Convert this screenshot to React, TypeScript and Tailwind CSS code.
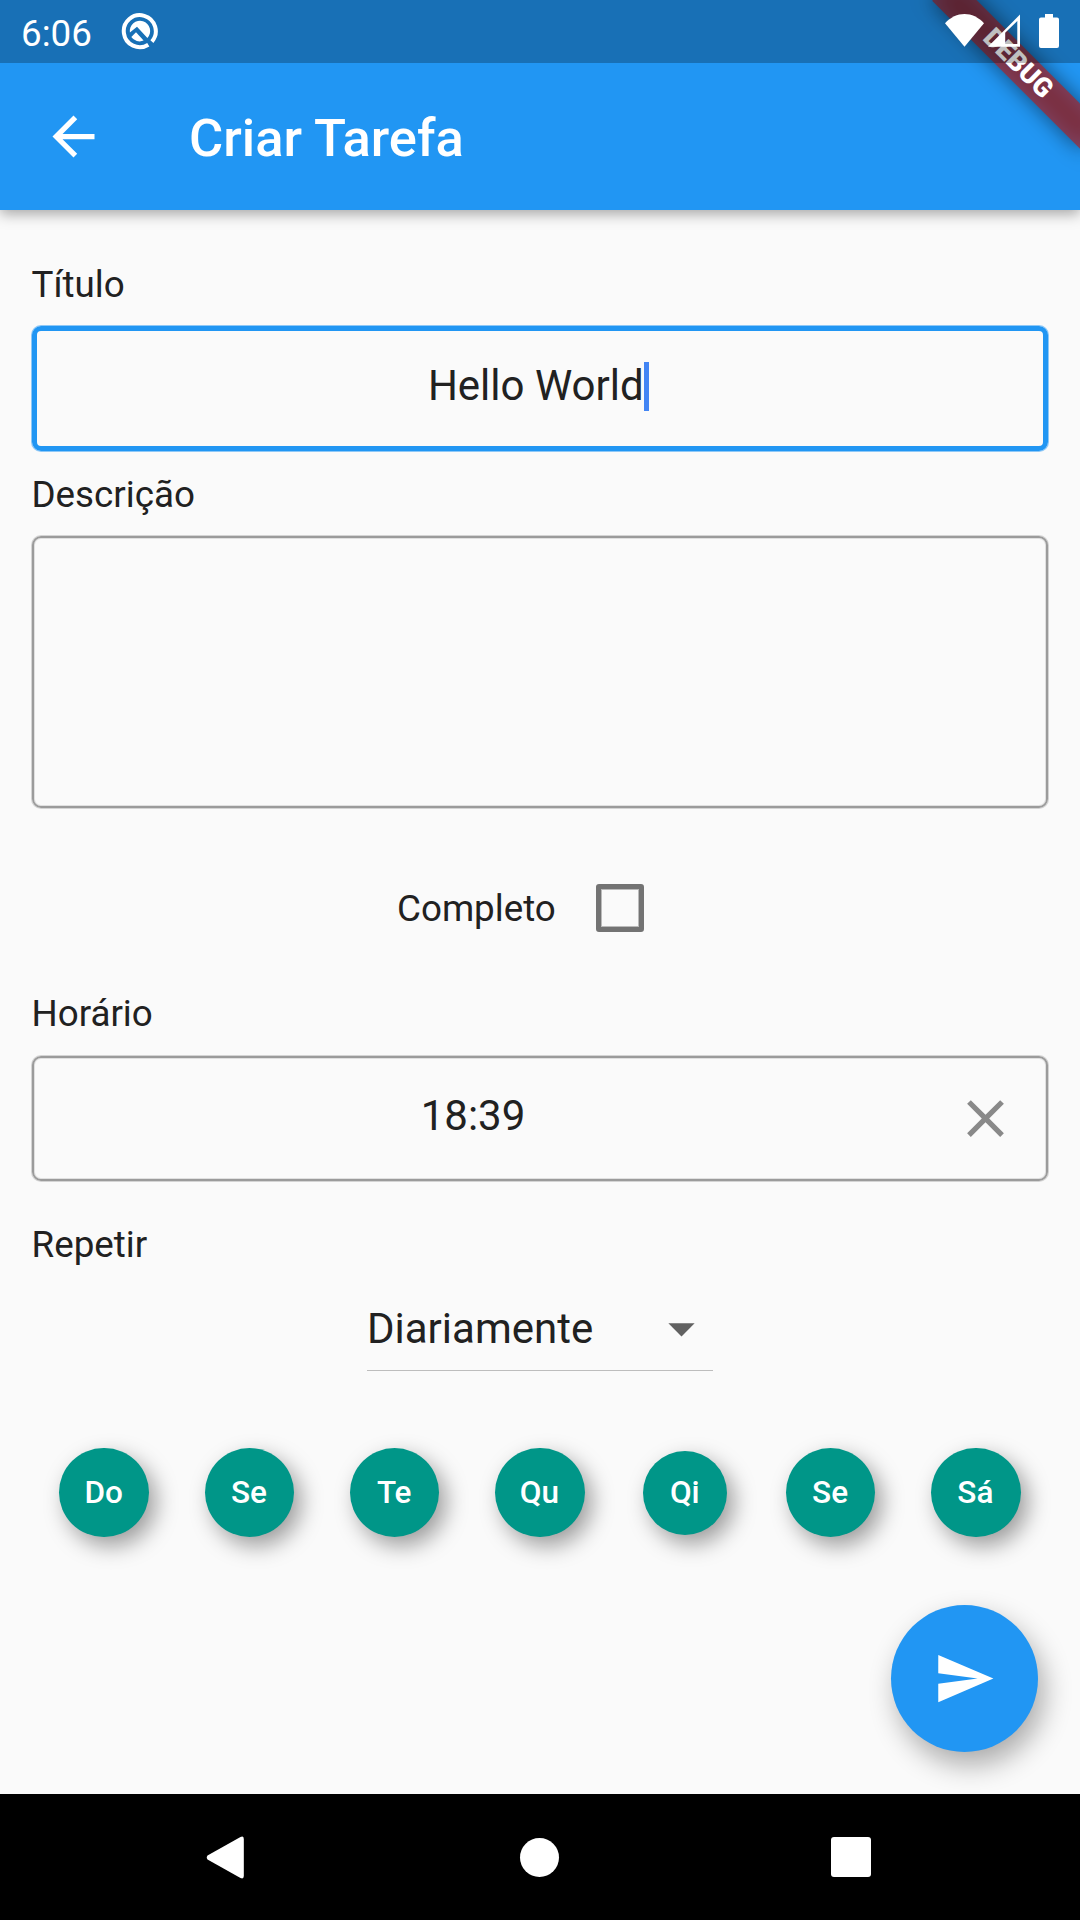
import type { ReactNode } from "react";
import { MdArrowBack, MdArrowDropDown, MdClose, MdSend } from "react-icons/md";

const days = [
  { label: "Do", size: "w-[89.5px] h-[89.5px]" },
  { label: "Se", size: "w-[89.5px] h-[89.5px]" },
  { label: "Te", size: "w-[89.5px] h-[89.5px]" },
  { label: "Qu", size: "w-[89.5px] h-[89.5px]" },
  { label: "Qi", size: "w-[84px] h-[84px]" },
  { label: "Se", size: "w-[89.5px] h-[89.5px]" },
  { label: "Sá", size: "w-[89.5px] h-[89.5px]" },
];

function Label({ children, className = "" }: { children: ReactNode; className?: string }) {
  return <div className={`-ml-[0.5px] text-[36.75px] leading-[43px] ${className}`}>{children}</div>;
}

function StatusBar() {
  return (
    <div className="flex h-[63px] items-start bg-black/25 px-[21px] text-white">
      <span className="mt-[12px] w-[100px] text-[36.75px] leading-[43px]">6:06</span>
      <svg className="mt-[13px] h-[37px] w-[38px]" viewBox="0 0 38 37" fill="none">
        <path d="M27.3 31.7A16 16 0 1 1 30.9 28.6" stroke="#fff" strokeWidth="4" />
        <path d="M8.9 19.6A10.2 10.2 0 1 1 26.4 25L16 13.7Z" fill="#fff" />
        <path d="M10.3 24L15 19.3L22.6 27.6A10.2 10.2 0 0 1 10.3 24Z" fill="#fff" />
      </svg>
      <div className="ml-auto flex items-start">
        <svg className="mt-[14px] h-[33px] w-[39px]" viewBox="0 0 39 33">
          <path d="M0 9.3C11-3.1 28-3.1 39 9.3L19.5 32.7Z" fill="#fff" />
        </svg>
        <svg className="ml-[4px] mt-[14px] h-[33px] w-[32px]" viewBox="0 0 32 33">
          <path fillRule="evenodd" d="M0 32.7L32 0.5V32.7ZM17.2 18.8V30H29.3V7Z" fill="#fff" />
        </svg>
        <svg className="ml-[19px] mt-[14px] h-[34px] w-[20px]" viewBox="0 0 20 34">
          <path d="M6 0H14V3.5H18Q20 3.5 20 5.5V32Q20 34 18 34H2Q0 34 0 32V5.5Q0 3.5 2 3.5H6Z" fill="#fff" />
        </svg>
      </div>
    </div>
  );
}

function DebugRibbon() {
  return (
    <div className="pointer-events-none absolute inset-0 z-20 overflow-hidden">
      <div className="absolute left-[976px] top-[73.5px] h-[31.5px] w-[210px] origin-[105px_-73.5px] rotate-45">
        <div className="absolute inset-0 bg-black/50 blur-[10.4px]" />
        <div className="absolute inset-0 flex items-center justify-center bg-[#b71c1c]/63 text-[26.8px] font-black leading-none text-white">
          DEBUG
        </div>
      </div>
    </div>
  );
}

const outline =
  "rounded-[9px] border-2 border-[#9b9b9b] ring-1 ring-black/15 inset-ring-1 inset-ring-black/10";

export default function App() {
  return (
    <div className="relative flex h-[1920px] w-[1080px] flex-col overflow-hidden bg-[#fafafa] font-['Roboto',sans-serif] text-[#212121]">
      <header className="relative z-10 flex h-[210px] shrink-0 flex-col bg-[#2196f3] shadow-[0_4px_13px_rgba(0,0,0,0.34)]">
        <div className="h-[63px]" />
        <div className="flex flex-1 items-center pl-[42px] text-white">
          <MdArrowBack className="h-[63px] w-[63px]" />
          <h1 className="ml-[84px] mt-[2px] text-[52.5px] font-medium leading-[62px]">Criar Tarefa</h1>
        </div>
      </header>
      <DebugRibbon />
      <div className="absolute inset-x-0 top-0 z-30">
        <StatusBar />
      </div>

      <main className="flex flex-1 flex-col px-[32px] pt-[53px]">
        <Label>Título</Label>
        <div className="mt-[20px] flex h-[125px] justify-center rounded-[9px] border-[5px] border-[#2196f3] pr-[3px] pt-[30px] ring-1 ring-[#2196f3]/50">
          <span className="text-[42px] leading-[49px]">Hello World</span>
          <span className="mt-[1px] h-[49px] w-[5.5px] bg-[#4285f4]" />
        </div>

        <Label className="mt-[22px]">Descrição</Label>
        <div className={`mt-[20px] h-[272px] ${outline}`} />

        <div className="mt-[76px] flex h-[48px] items-center pl-[365.5px]">
          <Label>Completo</Label>
          <div className="ml-auto mr-[404px] h-[48px] w-[48px] rounded-[3px] border-[5px] border-[#737373] inset-ring-1 inset-ring-black/25" />
        </div>

        <Label className="mt-[60px]">Horário</Label>
        <div className={`relative mt-[21px] flex h-[125px] items-start pt-[33px] ${outline}`}>
          <span className="flex-1 pr-[134px] text-center text-[42px] leading-[49px]">18:39</span>
          <MdClose className="absolute right-[29px] top-[29px] h-[63px] w-[63px] text-[#898989]" />
        </div>

        <Label className="mt-[42px]">Repetir</Label>
        <div className="ml-[335px] mt-[31px] flex h-[74px] w-[346px] items-start justify-between border-b border-[#bdbdbd]">
          <span className="mt-[7px] text-[42px] leading-[49px]">Diariamente</span>
          <MdArrowDropDown className="h-[63px] w-[63px] text-[#616161]" />
        </div>

        <div className="-mx-[0.5px] mt-[76.5px] grid h-[90px] grid-cols-7 place-items-center">
          {days.map((d, i) => (
            <div
              key={i}
              className={`${d.size} flex items-center justify-center rounded-full bg-[#009688] pr-[1px] text-[31.5px] font-medium text-white shadow-[7px_9px_22px_rgba(0,0,0,0.38)]`}
            >
              {d.label}
            </div>
          ))}
        </div>

        <button className="ml-auto mr-[10px] mt-[67.5px] flex h-[147px] w-[147px] items-center justify-center rounded-full bg-[#2196f3] text-white shadow-[6px_13px_28px_rgba(0,0,0,0.32)]">
          <MdSend className="h-[63px] w-[63px]" />
        </button>
      </main>

      <nav className="relative z-10 flex h-[126px] shrink-0 items-center bg-black pl-[206px] pr-[209px]">
        <svg className="h-[43px] w-[38px]" viewBox="0 0 38 43">
          <path d="M1.5 19.5L34.5 1Q37.8-0.5 37.8 3V40Q37.8 43.5 34.5 42L1.5 23.5Q0 21.5 1.5 19.5Z" fill="#fff" />
        </svg>
        <div className="ml-[276px] h-[39px] w-[39px] rounded-full bg-white" />
        <div className="ml-auto h-[40px] w-[40px] rounded-[3px] bg-white" />
      </nav>
    </div>
  );
}
